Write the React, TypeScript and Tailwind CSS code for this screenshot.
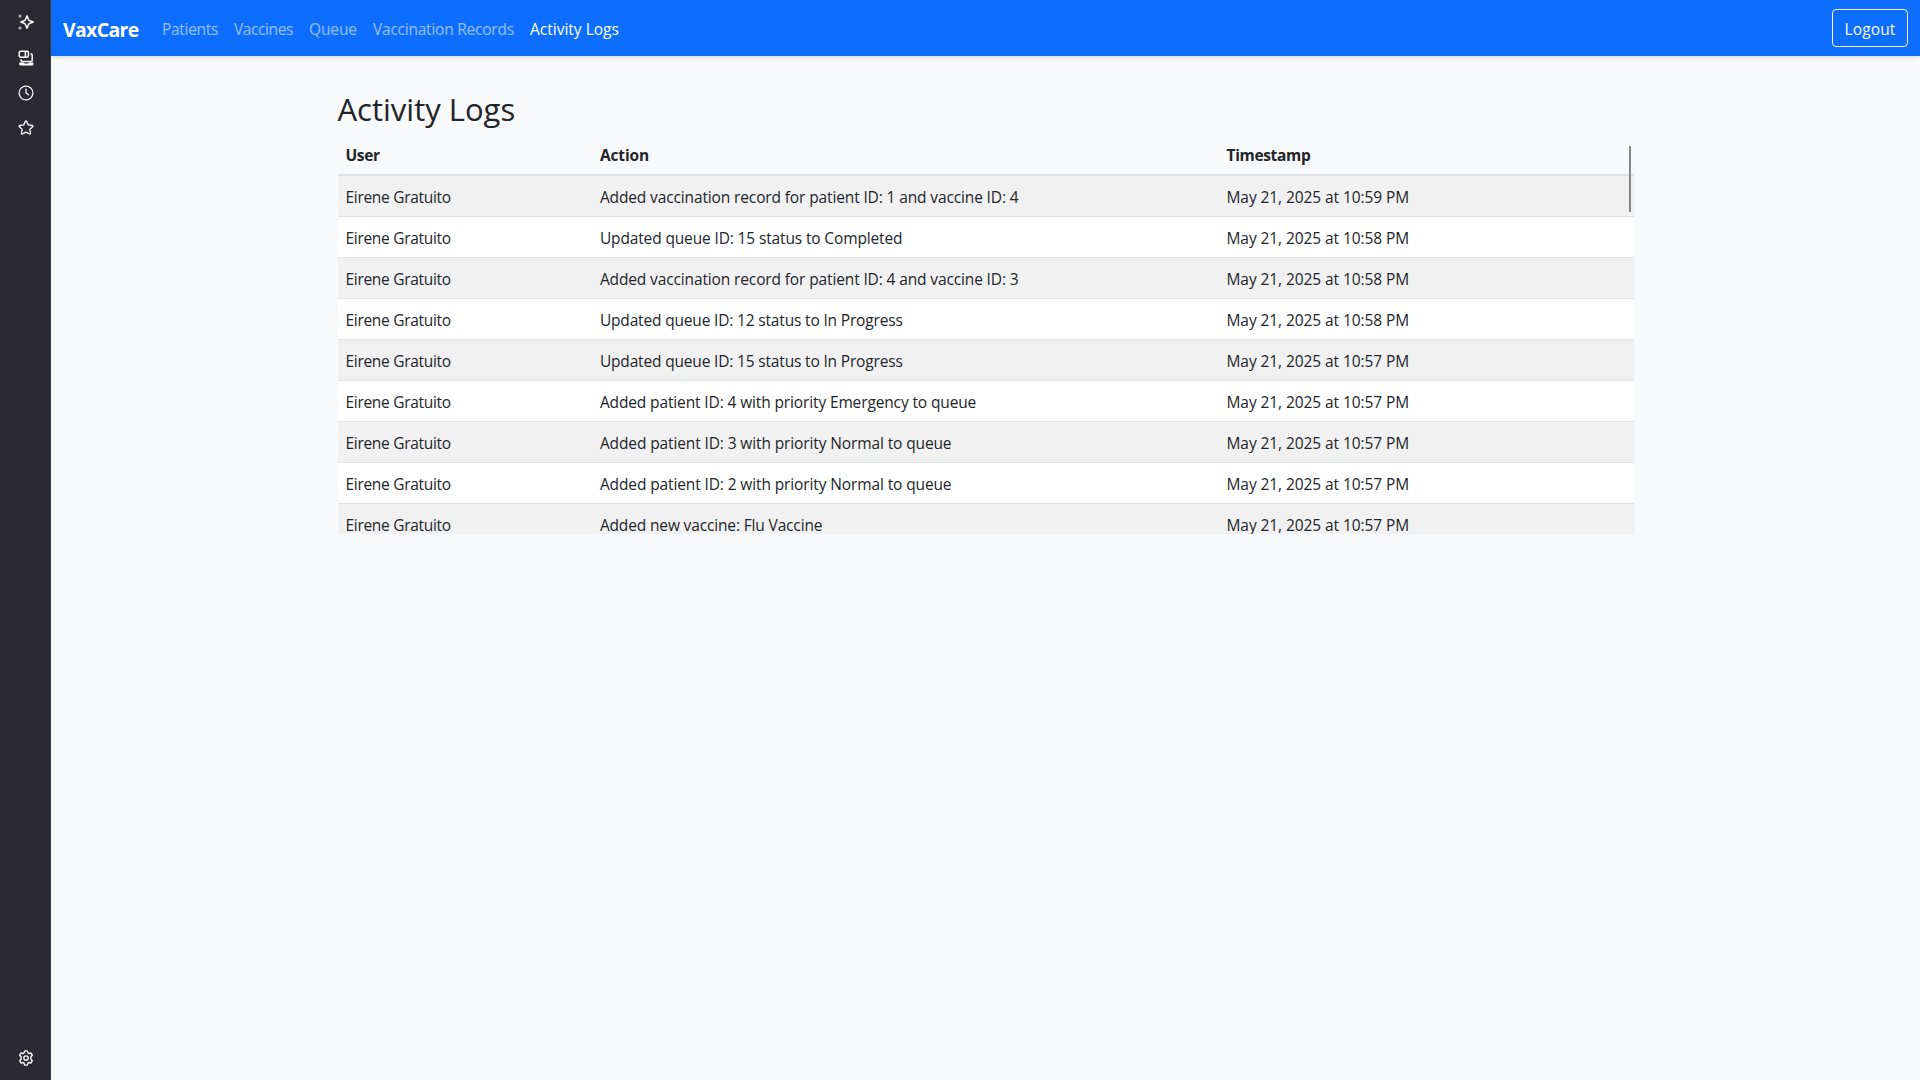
const links = [
  { label: "Patients", width: "w-[56px]", tracking: "tracking-[-0.31px]" },
  { label: "Vaccines", width: "w-[59px]", tracking: "tracking-[-0.4px]" },
  { label: "Queue", width: "w-[48px]", tracking: "tracking-[-0.1px]" },
  { label: "Vaccination Records", width: "w-[141px]", tracking: "tracking-[-0.23px]" },
  { label: "Activity Logs", width: "w-[90px]", tracking: "tracking-normal", active: true },
];

const logs = [
  { action: "Added vaccination record for patient ID: 1 and vaccine ID: 4", time: "10:59", tracking: "tracking-[-0.13px]" },
  { action: "Updated queue ID: 15 status to Completed", time: "10:58", tracking: "tracking-[-0.14px]" },
  { action: "Added vaccination record for patient ID: 4 and vaccine ID: 3", time: "10:58", tracking: "tracking-[-0.13px]" },
  { action: "Updated queue ID: 12 status to In Progress", time: "10:58", tracking: "tracking-[-0.17px]" },
  { action: "Updated queue ID: 15 status to In Progress", time: "10:57", tracking: "tracking-[-0.17px]" },
  { action: "Added patient ID: 4 with priority Emergency to queue", time: "10:57", tracking: "tracking-[-0.13px]" },
  { action: "Added patient ID: 3 with priority Normal to queue", time: "10:57", tracking: "tracking-[-0.12px]" },
  { action: "Added patient ID: 2 with priority Normal to queue", time: "10:57", tracking: "tracking-[-0.12px]" },
  { action: "Added new vaccine: Flu Vaccine", time: "10:57", tracking: "tracking-[-0.15px]" },
];

function SparkleIcon() {
  return (
    <svg width="16" height="16" viewBox="0 0 16 16" fill="none" stroke="#fbfbfe" strokeWidth="1.5" strokeLinejoin="round">
      <path d="M9 1.7 10.4 5.2Q10.8 6.3 11.9 6.7L15.2 8 11.9 9.3Q10.8 9.7 10.4 10.8L9 14.3 7.6 10.8Q7.2 9.7 6.1 9.3L2.8 8 6.1 6.7Q7.2 6.3 7.6 5.2Z" />
      <circle cx="2" cy="2" r="1.5" fill="#bcbbc2" stroke="none" />
      <circle cx="2" cy="14" r="1.5" fill="#bcbbc2" stroke="none" />
    </svg>
  );
}

function DevicesIcon() {
  return (
    <svg width="16" height="16" viewBox="0 0 16 16" fill="none" stroke="#fbfbfe" strokeWidth="1.5" strokeLinejoin="round">
      <rect x="1.2" y="1.2" width="9.2" height="6" rx="1.4" />
      <path d="M7.4 1v6.4M12.3 3.9h1q.9 0 .9.9v5.8q0 .9-.9.9H4q-.9 0-.9-.9V9.2" />
      <path d="M1.2 12.6h4.4q.6 1 1.4 1h2.6q.8 0 1.4-1h4.4v1.6q0 1.4-1.4 1.4H2.6q-1.4 0-1.4-1.4Z" fill="#fbfbfe" stroke="none" />
    </svg>
  );
}

function ClockIcon() {
  return (
    <svg width="16" height="16" viewBox="0 0 16 16" fill="none" stroke="#fbfbfe" strokeWidth="1.25" strokeLinecap="round" strokeLinejoin="round">
      <circle cx="8" cy="8" r="6.9" />
      <path d="M8 4.2V8l2.6 1.8" />
    </svg>
  );
}

function StarIcon() {
  return (
    <svg width="16" height="16" viewBox="0 0 16 16" fill="none" stroke="#fbfbfe" strokeWidth="1.3" strokeLinejoin="round">
      <path d="M7.4 1.4q.6-1.1 1.2 0l1.7 3.5 3.9.6q1.2.3.4 1.2l-2.8 2.7.7 3.9q.1 1.2-1 .7L8 12.2 4.5 14q-1.1.5-1-.7l.7-3.9L1.4 6.7Q.6 5.8 1.8 5.5l3.9-.6Z" />
    </svg>
  );
}

function GearIcon() {
  return (
    <svg width="16" height="16" viewBox="0 0 16 16" fill="none" stroke="#fbfbfe" strokeWidth="1.35" strokeLinejoin="round">
      <path d="M6.7.9h2.6l.6 2 1 .6 2.1-.5 1.3 2.2L12.9 6.8v2.4l1.4 1.6-1.3 2.2-2.1-.5-1 .6-.6 2H6.7l-.6-2-1-.6-2.1.5-1.3-2.2 1.4-1.6V6.8L1.7 5.2 3 3l2.1.5 1-.6Z" />
      <circle cx="8" cy="8" r="2.2" />
    </svg>
  );
}

export default function App() {
  return (
    <div className="flex h-[1080px] w-[1920px] overflow-hidden bg-[#f8f9fa] font-['Open_Sans',sans-serif] text-[15.5px] leading-6 text-[#212529]">
      <aside className="flex w-[51px] shrink-0 flex-col items-center justify-between border-r border-[#3b3a42] bg-[#2b2a33] pt-[14px] pb-[14px] pl-[2px]">
        <div className="flex flex-col items-center">
          <SparkleIcon />
          <div className="mt-5"><DevicesIcon /></div>
          <div className="mt-[19px]"><ClockIcon /></div>
          <div className="mt-[19px]"><StarIcon /></div>
        </div>
        <GearIcon />
      </aside>

      <div className="flex min-w-0 flex-1 flex-col">
        <nav className="flex h-14 shrink-0 items-center bg-[#0d6efd] px-3 shadow-[0_2px_4px_rgba(0,0,0,0.1)]">
          <a className="w-[76px] pt-[4px] text-[19.5px] leading-[30px] font-bold tracking-[-0.68px] whitespace-nowrap text-white">VaxCare</a>
          <div className="ml-[15px] flex flex-1">
            {links.map((l) => (
              <a key={l.label} className={`px-2 pt-[2px] ${l.active ? "text-white" : "text-white/55"}`}>
                <span className={`block whitespace-nowrap ${l.width} ${l.tracking}`}>{l.label}</span>
              </a>
            ))}
          </div>
          <button className="h-[38px] w-[76px] rounded-[4px] border border-[#f8f9fa] pt-[2px] text-center tracking-[0.1px] text-[#f8f9fa]">Logout</button>
        </nav>

        <main className="mx-auto w-[1296px] pt-8">
          <h2 className="h-[46px] pt-[2px] text-[31px] leading-[38px]">Activity Logs</h2>
          <div className="relative h-[400px] overflow-hidden">
            <table className="w-full table-fixed border-collapse text-left">
              <colgroup>
                <col className="w-[254.4px]" />
                <col className="w-[626.6px]" />
                <col />
              </colgroup>
              <thead>
                <tr className="h-[42px] font-bold shadow-[inset_0_-2px_#dee2e6]">
                  <th className="px-2 pt-[9px] pb-[9px] tracking-[-0.35px]">User</th>
                  <th className="px-2 pt-[9px] pb-[9px] tracking-[-0.1px]">Action</th>
                  <th className="px-2 pt-[9px] pb-[9px] tracking-[-0.33px]">Timestamp</th>
                </tr>
              </thead>
              <tbody>
                {logs.map((log, i) => (
                  <tr key={i} className="h-[41px] bg-white shadow-[inset_0_-1px_#dee2e6] odd:bg-[#f1f1f1]">
                    <td className="px-2 pt-[9px] pb-[8px] tracking-[-0.3px]">Eirene Gratuito</td>
                    <td className={`px-2 pt-[9px] pb-[8px] ${log.tracking}`}>{log.action}</td>
                    <td className="px-2 pt-[9px] pb-[8px] tracking-[-0.08px]">May 21, 2025 at {log.time} PM</td>
                  </tr>
                ))}
              </tbody>
            </table>
            <div className="absolute top-3 right-[3px] h-[66px] w-[2px] bg-[#85868a]" />
          </div>
        </main>
      </div>
    </div>
  );
}
